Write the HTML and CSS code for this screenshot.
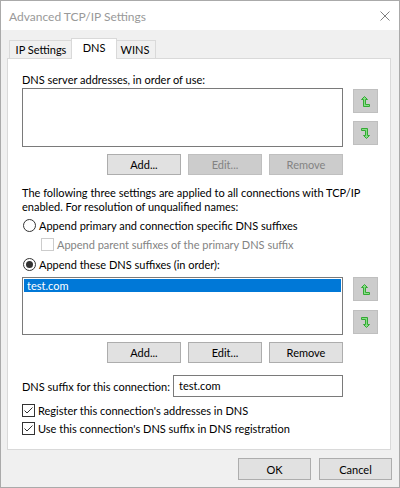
FILE: index.html
```html
<!DOCTYPE html>
<html>
<head>
<meta charset="utf-8">
<title>Advanced TCP/IP Settings</title>
<link rel="stylesheet" href="styles.css">
</head>
<body>
<div class="window">
  <div class="titlebar">
    <span class="title">Advanced TCP/IP Settings</span>
    <svg class="close" width="10" height="10" viewBox="0 0 10 10"><path d="M0.5 0.5L9.5 9.5M9.5 0.5L0.5 9.5" stroke="#808080" stroke-width="1" fill="none"/></svg>
  </div>

  <div class="tabs">
    <div class="tab tab-ip">IP Settings</div>
    <div class="tab tab-dns active">DNS</div>
    <div class="tab tab-wins">WINS</div>
  </div>

  <div class="panel">
    <div class="label">DNS server addresses, in order of use:</div>
    <div class="list-row list-row-1">
      <div class="listbox listbox-1"></div>
      <div class="side side-1">
        <div class="arrow-btn">
          <svg width="9" height="11" viewBox="0 0 9 11"><path d="M3.5 0.5L6.5 3.5L4.5 3.5L4.5 8.5L8.5 8.5L8.5 10.5L2.5 10.5L2.5 3.5L0.5 3.5Z" fill="#86e086" stroke="#34a834" stroke-width="1" stroke-linejoin="miter"/></svg>
        </div>
        <div class="arrow-btn">
          <svg width="9" height="11" viewBox="0 0 9 11"><path d="M5.5 10.5L2.5 7.5L4.5 7.5L4.5 2.5L0.5 2.5L0.5 0.5L6.5 0.5L6.5 7.5L8.5 7.5Z" fill="#86e086" stroke="#34a834" stroke-width="1" stroke-linejoin="miter"/></svg>
        </div>
      </div>
    </div>
    <div class="btn-row">
      <div class="btn">Add...</div>
      <div class="btn disabled">Edit...</div>
      <div class="btn disabled">Remove</div>
    </div>

    <div class="para">The following three settings are applied to all connections with TCP/IP<br>enabled. For resolution of unqualified names:</div>

    <div class="opt-row radio-row-1">
      <svg class="radio" width="13" height="13" viewBox="0 0 13 13"><circle cx="6.5" cy="6.5" r="6" fill="#fff" stroke="#333" stroke-width="1"/></svg>
      <span>Append primary and connection specific DNS suffixes</span>
    </div>
    <div class="opt-row sub-row disabled-text">
      <span class="checkbox checkbox-disabled"></span>
      <span>Append parent suffixes of the primary DNS suffix</span>
    </div>
    <div class="opt-row radio-row-2">
      <svg class="radio" width="13" height="13" viewBox="0 0 13 13"><circle cx="6.5" cy="6.5" r="6" fill="#fff" stroke="#333" stroke-width="1"/><circle cx="6.5" cy="6.5" r="3.5" fill="#333"/></svg>
      <span>Append these DNS suffixes (in order):</span>
    </div>

    <div class="list-row list-row-2">
      <div class="listbox listbox-2">
        <div class="item selected">test.com</div>
      </div>
      <div class="side side-2">
        <div class="arrow-btn">
          <svg width="9" height="11" viewBox="0 0 9 11"><path d="M3.5 0.5L6.5 3.5L4.5 3.5L4.5 8.5L8.5 8.5L8.5 10.5L2.5 10.5L2.5 3.5L0.5 3.5Z" fill="#86e086" stroke="#34a834" stroke-width="1" stroke-linejoin="miter"/></svg>
        </div>
        <div class="arrow-btn">
          <svg width="9" height="11" viewBox="0 0 9 11"><path d="M5.5 10.5L2.5 7.5L4.5 7.5L4.5 2.5L0.5 2.5L0.5 0.5L6.5 0.5L6.5 7.5L8.5 7.5Z" fill="#86e086" stroke="#34a834" stroke-width="1" stroke-linejoin="miter"/></svg>
        </div>
      </div>
    </div>
    <div class="btn-row">
      <div class="btn">Add...</div>
      <div class="btn">Edit...</div>
      <div class="btn">Remove</div>
    </div>

    <div class="suffix-row">
      <span class="suffix-label">DNS suffix for this connection:</span>
      <div class="textbox">test.com</div>
    </div>

    <div class="opt-row check-row-1">
      <svg class="check" width="13" height="13" viewBox="0 0 13 13"><rect x="0.5" y="0.5" width="12" height="12" fill="#fff" stroke="#333" stroke-width="1"/><path d="M2.5 6.5L5 9L10.5 3.5" fill="none" stroke="#333" stroke-width="1"/></svg>
      <span>Register this connection's addresses in DNS</span>
    </div>
    <div class="opt-row check-row-2">
      <svg class="check" width="13" height="13" viewBox="0 0 13 13"><rect x="0.5" y="0.5" width="12" height="12" fill="#fff" stroke="#333" stroke-width="1"/><path d="M2.5 6.5L5 9L10.5 3.5" fill="none" stroke="#333" stroke-width="1"/></svg>
      <span>Use this connection's DNS suffix in DNS registration</span>
    </div>
  </div>

  <div class="footer">
    <div class="btn footer-btn">OK</div>
    <div class="btn footer-btn">Cancel</div>
  </div>
</div>
</body>
</html>
```

FILE: styles.css
```css
* {
  box-sizing: border-box;
}

html, body {
  margin: 0;
  padding: 0;
  background: #ffffff;
}

body {
  font-family: Lato, "Liberation Sans", sans-serif;
  font-size: 11px;
  color: #000;
}

.window {
  width: 400px;
  height: 488px;
  border: 1px solid #aaaaaa;
  background: #f0f0f0;
  display: flex;
  flex-direction: column;
}

.titlebar {
  height: 29px;
  background: #ffffff;
  display: flex;
  align-items: center;
  justify-content: space-between;
  padding: 0 9px 0 8px;
  flex: none;
}

.title {
  color: #999999;
  font-size: 12px;
  line-height: 15px;
  margin-top: 1px;
}

.close {
  display: block;
}

/* Tabs */
.tabs {
  display: flex;
  align-items: flex-end;
  margin-left: 8px;
  padding-top: 8px;
  height: 28px;
  flex: none;
}

.tab {
  height: 18px;
  border: 1px solid #d9d9d9;
  border-bottom: none;
  background: #f0f0f0;
  display: flex;
  align-items: center;
  justify-content: center;
  line-height: 15px;
  white-space: nowrap;
}

.tab-ip {
  width: 64px;
}

.tab-wins {
  width: 41px;
  border-left: none;
}

.tab.active {
  position: relative;
  z-index: 1;
  height: 21px;
  width: 46px;
  margin: 0 -2px -1px -2px;
  background: #ffffff;
  padding-bottom: 3px;
}

/* Panel */
.panel {
  margin: 0 8px 0 6px;
  border: 1px solid #d9d9d9;
  background: #ffffff;
  padding: 13px 11px 12px 14px;
  flex: none;
}

.label {
  height: 15px;
  line-height: 15px;
  white-space: nowrap;
}

.list-row {
  display: flex;
  gap: 10px;
}

.list-row-1 {
  margin-top: 1px;
}

.list-row-2 {
  margin-top: 4px;
}

.listbox {
  width: 321px;
  border: 1px solid #7a7a7a;
  background: #ffffff;
  padding: 1px;
}

.listbox-1 {
  height: 59px;
}

.listbox-2 {
  height: 58px;
}

.item {
  height: 13px;
  line-height: 13px;
  padding-left: 3px;
  white-space: nowrap;
}

.item.selected {
  background: #0078d7;
  color: #ffffff;
}

.side {
  display: flex;
  flex-direction: column;
}

.side-1 {
  padding-top: 1px;
  gap: 8px;
}

.side-2 {
  gap: 9px;
}

.arrow-btn {
  width: 25px;
  height: 24px;
  background: #cccccc;
  border: 1px solid #bfbfbf;
  display: flex;
  align-items: center;
  justify-content: center;
}

.arrow-btn svg {
  display: block;
}

/* Buttons */
.btn-row {
  width: 321px;
  display: flex;
  justify-content: flex-end;
  gap: 7px;
  margin-top: 7px;
}

.btn {
  width: 74px;
  height: 21px;
  background: #e1e1e1;
  border: 1px solid #adadad;
  display: flex;
  align-items: center;
  justify-content: center;
  line-height: 15px;
  white-space: nowrap;
}

.btn.disabled {
  background: #cccccc;
  border-color: #bfbfbf;
  color: #838383;
}

.para {
  margin-top: 11px;
  line-height: 14px;
  white-space: nowrap;
}

/* Options */
.opt-row {
  height: 18px;
  display: flex;
  align-items: center;
  white-space: nowrap;
  line-height: 15px;
}

.opt-row svg,
.opt-row .checkbox {
  flex: none;
  display: block;
}

.radio-row-1 {
  margin-top: 2px;
  gap: 3px;
}

.radio-row-1 .radio,
.radio-row-2 .radio {
  margin-left: 1px;
}

.radio-row-2 {
  margin-top: 2px;
  gap: 3px;
}

.sub-row {
  margin-top: 1px;
  padding-left: 19px;
  gap: 3px;
}

.disabled-text {
  color: #838383;
}

.checkbox {
  width: 13px;
  height: 13px;
  border: 1px solid #cccccc;
  background: #ffffff;
}

.check-row-1 {
  margin-top: 4px;
  gap: 3px;
}

.check-row-2 {
  gap: 3px;
}

/* Suffix row */
.suffix-row {
  width: 321px;
  height: 22px;
  margin-top: 12px;
  display: flex;
  align-items: center;
  justify-content: space-between;
}

.suffix-label {
  white-space: nowrap;
  line-height: 15px;
}

.textbox {
  width: 170px;
  height: 22px;
  border: 1px solid #7a7a7a;
  background: #ffffff;
  padding: 2px 0 0 5px;
  line-height: 15px;
}

/* Footer */
.footer {
  display: flex;
  justify-content: flex-end;
  gap: 8px;
  margin-top: 8px;
  padding-right: 7px;
}

.footer-btn {
  width: 73px;
  height: 22px;
}
```
